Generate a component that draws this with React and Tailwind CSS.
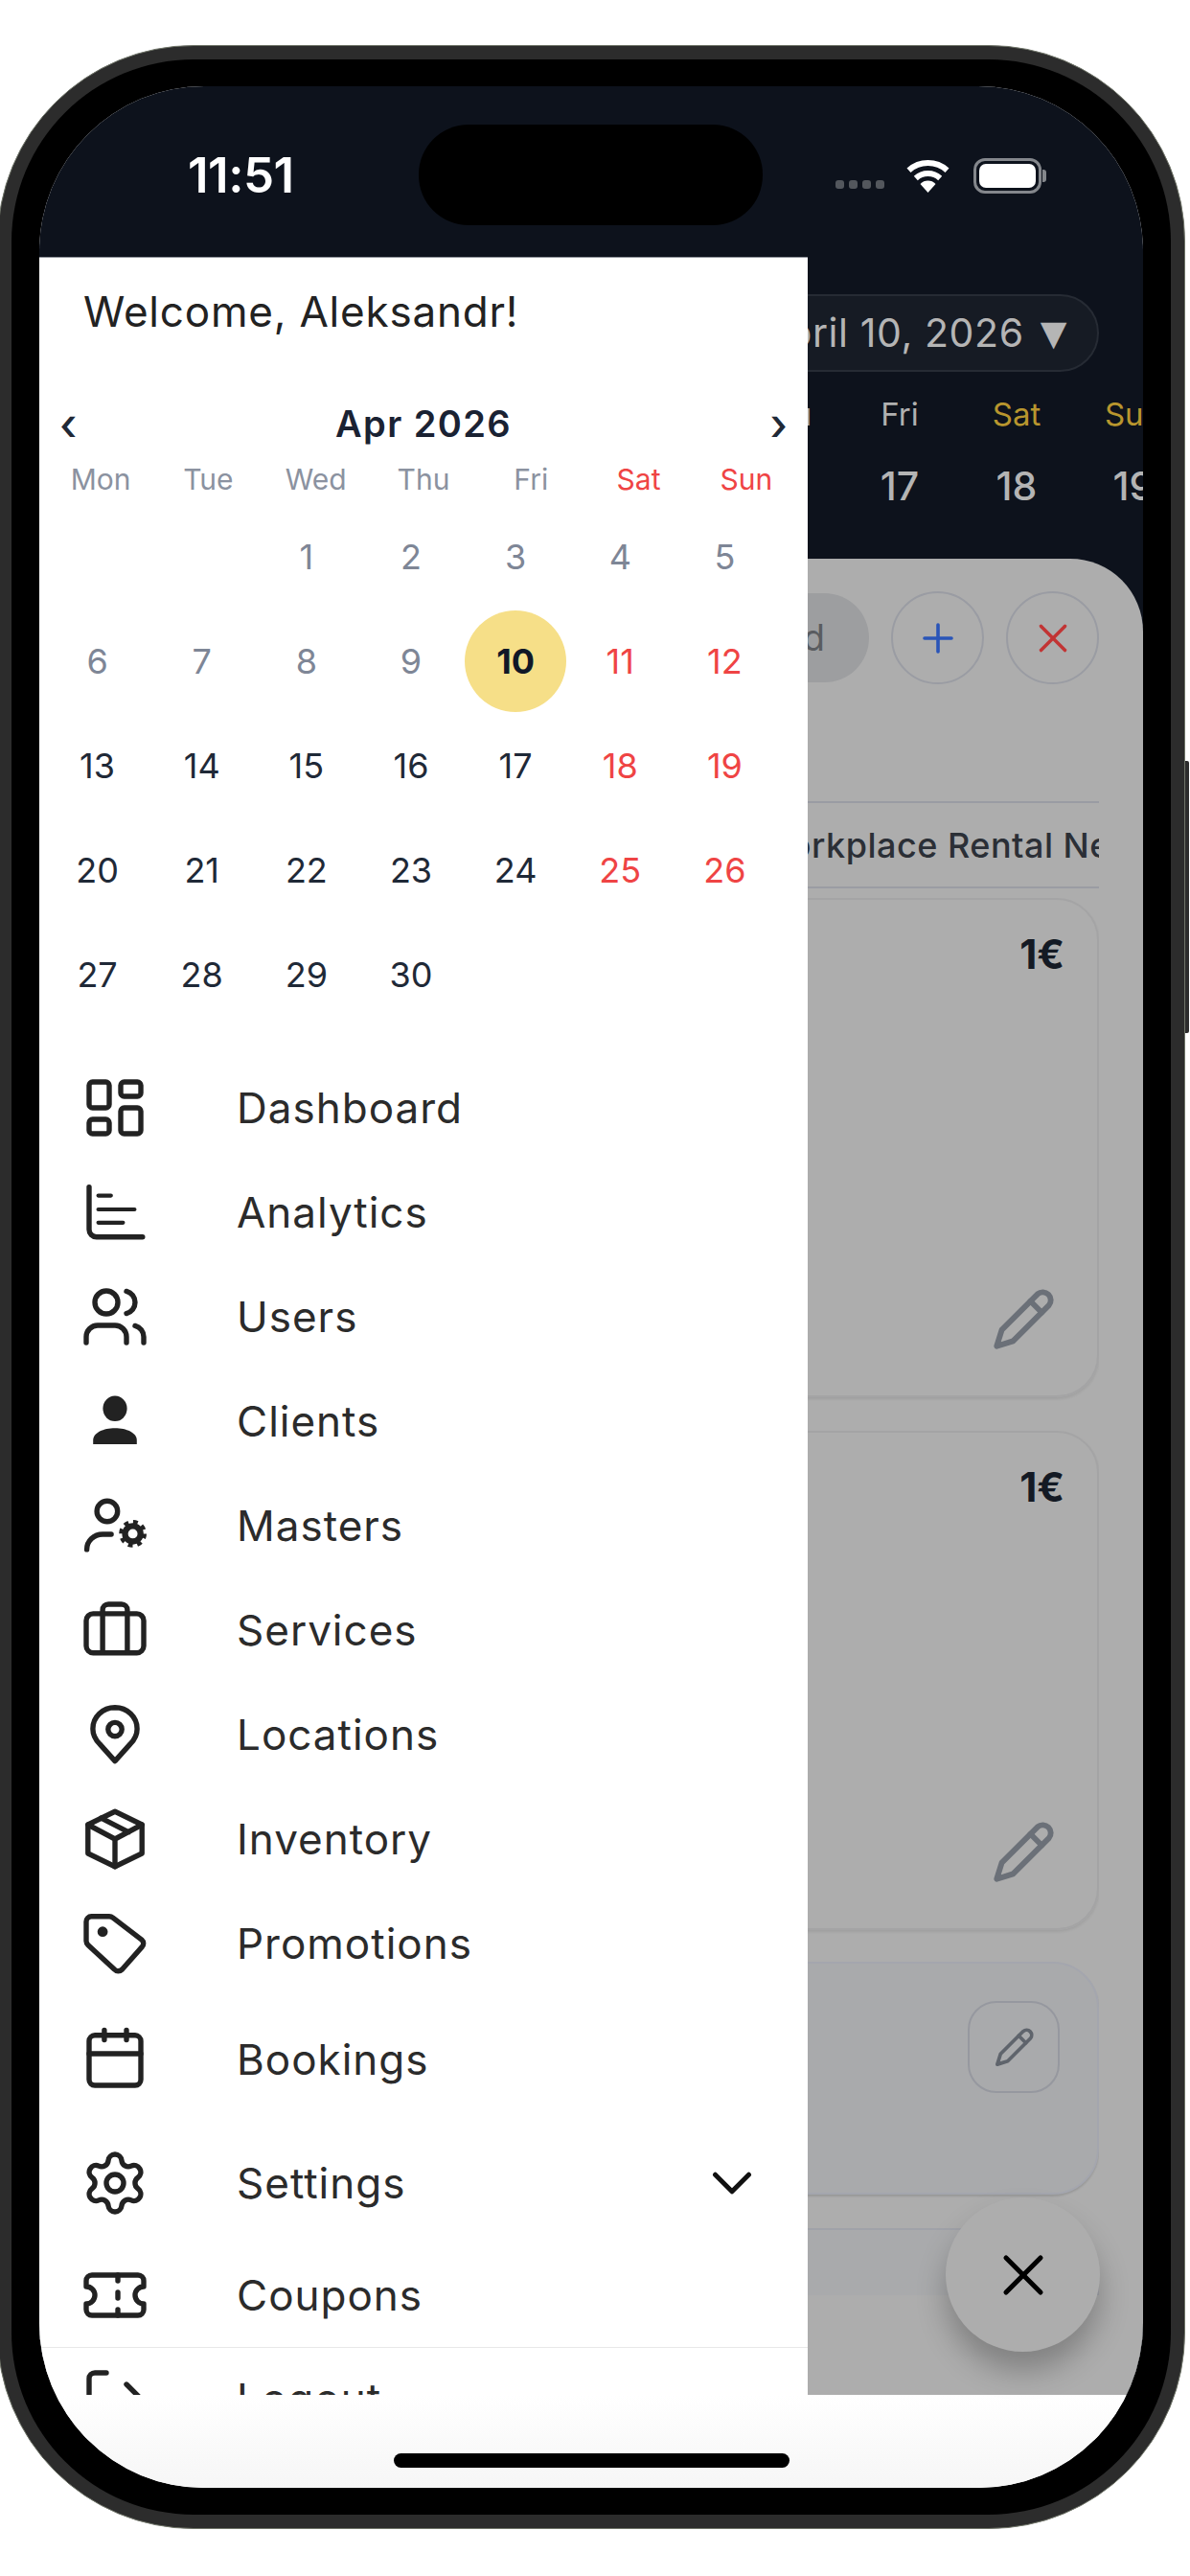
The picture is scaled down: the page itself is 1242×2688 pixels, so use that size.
import { ChevronDown, LogOut, Plus, Settings, Ticket, Users, X } from "lucide-react";

function Svg({ children, className = "" }) {
  return (
    <svg viewBox="0 0 24 24" width="72" height="72" fill="none" stroke="currentColor" strokeWidth="1.8" strokeLinecap="round" strokeLinejoin="round" className={className}>
      {children}
    </svg>
  );
}

function EditPencil({ size, className = "" }) {
  return (
    <svg viewBox="0 0 90 90" width={size} height={size} fill="none" stroke="currentColor" strokeWidth="5.5" strokeLinecap="round" strokeLinejoin="round" className={className}>
      <path d="M19 71 24 55 59 20A7.8 7.8 0 0 1 70 31L35 66Z" />
      <path d="M52 27 63 38" />
    </svg>
  );
}

const icons = {
  dashboard: (
    <Svg>
      <rect x="3" y="3" width="7" height="9" rx="1.2" />
      <rect x="14" y="3" width="7" height="5" rx="1.2" />
      <rect x="14" y="12" width="7" height="9" rx="1.2" />
      <rect x="3" y="16" width="7" height="5" rx="1.2" />
    </Svg>
  ),
  analytics: (
    <Svg>
      <path d="M3 3.2V18a2.6 2.6 0 0 0 2.6 2.6H21.6" />
      <path d="M6.2 6.2h4.4M6.2 11h12.6M6.2 15.6h8.6" strokeWidth="1.4" />
    </Svg>
  ),
  users: <Users size={72} strokeWidth={1.8} />,
  clients: (
    <Svg>
      <ellipse cx="12" cy="7.6" rx="4.2" ry="4.4" fill="currentColor" stroke="none" />
      <path d="M4.4 20v-1.4C4.4 16 8 14.4 12 14.4s7.6 1.6 7.6 4.2V20z" fill="currentColor" stroke="none" />
    </Svg>
  ),
  masters: (
    <Svg>
      <circle cx="9.3" cy="7" r="3.6" />
      <path d="M2.2 20.3c0-3 2.5-5.3 5.5-5.3h3" />
      <circle cx="18.2" cy="14.8" r="2.7" strokeWidth="2.1" />
      <circle cx="18.2" cy="14.8" r="4" strokeWidth="1.6" strokeDasharray="1.57 1.57" strokeLinecap="butt" />
    </Svg>
  ),
  services: (
    <Svg>
      <rect x="2" y="6.3" width="20" height="13.6" rx="2.4" />
      <path d="M7.7 19.8V5a2 2 0 0 1 2-2h4.6a2 2 0 0 1 2 2v14.8" />
    </Svg>
  ),
  locations: (
    <Svg>
      <path d="M12 2.6C7.7 2.6 4.3 5.9 4.3 10c0 2.2 1 3.9 2.4 5.3L12 21.2l5.3-5.9c1.4-1.4 2.4-3.1 2.4-5.3 0-4.1-3.4-7.4-7.7-7.4z" />
      <circle cx="12" cy="10.2" r="2.4" />
    </Svg>
  ),
  inventory: (
    <Svg>
      <path d="M12 2.4 21.4 7v10L12 21.6 2.6 17V7z" />
      <path d="M2.6 7 12 12l9.4-5M12 12v9.6M7.2 4.7l9.6 4.9" />
    </Svg>
  ),
  promotions: (
    <Svg>
      <path d="M3.8 2.6H10c.5 0 1 .2 1.4.5L21.3 10.7c.8.7.8 1.9 0 2.6L14.5 21c-.8.8-2 .8-2.7 0L2.7 12.6c-.4-.4-.7-.9-.7-1.4V4.4c0-1 .8-1.8 1.8-1.8z" />
      <circle cx="7.7" cy="7.9" r="0.9" fill="currentColor" />
    </Svg>
  ),
  bookings: (
    <Svg>
      <rect x="3" y="3.6" width="18" height="17.4" rx="2" />
      <path d="M8.3 1.8v3.4M16 1.8v3.4M3 10h18" />
    </Svg>
  ),
  settings: <Settings size={72} strokeWidth={1.8} />,
  coupons: <Ticket size={72} strokeWidth={1.8} />,
  logout: <LogOut size={72} strokeWidth={1.8} />,
};

const menu = [
  { label: "Dashboard", icon: "dashboard", row: "h-[109px]" },
  { label: "Analytics", icon: "analytics", row: "h-[109px]" },
  { label: "Users", icon: "users", row: "h-[109px]" },
  { label: "Clients", icon: "clients", row: "h-[109px]" },
  { label: "Masters", icon: "masters", row: "h-[109px]" },
  { label: "Services", icon: "services", row: "h-[109px]" },
  { label: "Locations", icon: "locations", row: "h-[109px]" },
  { label: "Inventory", icon: "inventory", row: "h-[109px]" },
  { label: "Promotions", icon: "promotions", row: "h-[109px]" },
  { label: "Bookings", icon: "bookings", row: "h-[133px]" },
  { label: "Settings", icon: "settings", row: "h-[125px]", expand: true },
  { label: "Coupons", icon: "coupons", row: "h-[109px]" },
  { label: "Logout", icon: "logout", row: "h-[107px] border-t border-[#e8e8e8]" },
];

const weekDays = ["Mon", "Tue", "Wed", "Thu", "Fri", "Sat", "Sun"];

function dayColor(day, col) {
  if (day === 10) return "text-[#111827] font-bold";
  if (col >= 5 && day > 10) return "text-[#ef4444]";
  if (day < 10) return "text-[#7e8696]";
  return "text-[#1f2937]";
}

function Calendar() {
  const cells = [null, null];
  for (let d = 1; d <= 30; d++) cells.push(d);

  return (
    <div>
      <div className="flex items-center justify-between px-[21px] mt-[65px] h-[48px]">
        <span className="text-[46px] leading-none font-medium text-[#1f2937]">‹</span>
        <span className="text-[38px] font-semibold tracking-[1.4px] text-[#1a2233]">Apr 2026</span>
        <span className="text-[46px] leading-none font-medium text-[#1f2937]">›</span>
      </div>
      <div className="grid grid-cols-7 mx-[8px] w-[786px] mt-[12px] h-[40px] items-center text-center text-[30px]">
        {weekDays.map((d, i) => (
          <span key={d} className={i >= 5 ? "text-[#ef4444]" : "text-[#8b92a0]"}>{d}</span>
        ))}
      </div>
      <div className="grid grid-cols-7 auto-rows-[109px] mx-[6px] w-[764px] mt-[8px] text-[36px]">
        {cells.map((day, i) => (
          <div key={i} className="flex items-center justify-center">
            {day && (
              <span className={`flex items-center justify-center w-[106px] h-[106px] rounded-full ${day === 10 ? "bg-[#f6df88]" : ""} ${dayColor(day, i % 7)}`}>
                {day}
              </span>
            )}
          </div>
        ))}
      </div>
    </div>
  );
}

function Drawer() {
  return (
    <div className="absolute left-0 top-[178px] w-[802px] h-[2231px] bg-white overflow-hidden border-t border-[#8e929a]">
      <p className="pl-[46px] pt-[28px] text-[44px] leading-[56px] tracking-[0.8px] text-[#222222]">Welcome, Aleksandr!</p>
      <Calendar />
      <div className="mt-[30px]">
        {menu.map((item) => (
          <div key={item.label} className={`flex items-center pl-[43px] text-[#222222] ${item.row}`}>
            <span className="w-[72px] h-[72px] shrink-0">{icons[item.icon]}</span>
            <span className="ml-[91px] text-[44px] tracking-[1px] text-[#2b2b2b]">{item.label}</span>
            {item.expand && <ChevronDown size={70} strokeWidth={1.7} className="ml-auto mr-[44px] text-[#111111]" />}
          </div>
        ))}
      </div>
    </div>
  );
}

function StatusBar() {
  return (
    <div className="flex items-center h-[186px] pl-[155px] pr-[101px] text-white">
      <span className="text-[51px] font-semibold tracking-[-0.5px]">11:51</span>
      <div className="ml-auto flex items-end gap-[5px] mt-[19px]">
        {[0, 1, 2, 3].map((i) => (
          <span key={i} className="w-[9px] h-[9px] rounded-[3px] bg-[#53575d]" />
        ))}
      </div>
      <svg width="47" height="37" viewBox="0 0 47 37" className="ml-[22px]" fill="none" stroke="white" strokeWidth="6">
        <path d="M3.5 12.7A30 30 0 0 1 43.5 12.7" />
        <path d="M10.8 20.9A19 19 0 0 1 36.2 20.9" />
        <path d="M23.5 36 15.5 27A11 11 0 0 1 31.5 27Z" fill="white" stroke="none" />
      </svg>
      <div className="ml-[24px] flex items-center">
        <span className="flex w-[71px] h-[37px] rounded-[12px] border-[3px] border-[#84878c] p-[3px]">
          <span className="flex-1 rounded-[7px] bg-white" />
        </span>
        <span className="w-[4px] h-[13px] ml-[1px] rounded-r-[3px] bg-[#84878c]" />
      </div>
    </div>
  );
}

function DateStrip() {
  return (
    <>
      <div className="flex justify-end pr-[46px] mt-[31px]">
        <div className="flex items-center h-[81px] pl-[60px] pr-[31px] rounded-full border-[2px] border-[#262b34] bg-[#161b24] text-[#b5b5b5] text-[41px] tracking-[0.6px] whitespace-nowrap">
          April 10, 2026
          <span className="ml-[17px] text-[36px] font-['DejaVu_Sans',sans-serif]">▼</span>
        </div>
      </div>
      <div className="flex justify-end -mr-[51px] mt-[22px] text-center text-[33px] leading-[44px]">
        <span className="w-[122px] text-[#b0b0b0]">Thu</span>
        <span className="w-[122px] text-[#b0b0b0]">Fri</span>
        <span className="w-[122px] text-[#b8962e]">Sat</span>
        <span className="w-[122px] text-[#b8962e]">Sun</span>
      </div>
      <div className="flex justify-end -mr-[51px] mt-[28px] text-center text-[41px] leading-[50px] font-medium text-[#b4b4b4]">
        <span className="w-[122px]">16</span>
        <span className="w-[122px]">17</span>
        <span className="w-[122px]">18</span>
        <span className="w-[122px]">19</span>
      </div>
    </>
  );
}

function ServiceCard() {
  return (
    <div className="flex flex-col items-end h-[521px] rounded-[44px] border-[2px] border-[#a4a4a5] shadow-[0_2px_3px_rgba(0,0,0,0.08)] pt-[33px] pr-[34px] pb-[31px]">
      <span className="text-[42px] leading-[48px] font-bold text-[#141a24]">1€</span>
      <EditPencil size={96} className="mt-auto -mr-[5px] text-[#6b7078]" />
    </div>
  );
}

function Sheet() {
  return (
    <div className="flex-1 mt-[51px] rounded-t-[76px] bg-[#adadad] pr-[46px] pt-[34px]">
      <div className="flex justify-end items-center gap-[23px]">
        <span className="flex items-center h-[93px] px-[46px] rounded-full bg-[#9d9ea0] text-[38px] text-[#5a5c60]">Add Record</span>
        <span className="flex items-center justify-center w-[97px] h-[97px] rounded-full border-[2px] border-[#9a9ca3] text-[#2a55b8]">
          <Plus size={48} strokeWidth={1.8} />
        </span>
        <span className="flex items-center justify-center w-[97px] h-[97px] rounded-full border-[2px] border-[#9a9ca3] text-[#c23434]">
          <X size={50} strokeWidth={1.7} />
        </span>
      </div>
      <div className="flex justify-end items-center mt-[122px] h-[91px] border-y-[2px] border-[#9a9ca3] overflow-hidden whitespace-nowrap">
        <span className="text-[36px] font-medium tracking-[0.5px] text-[#2b2f36] -mr-[12px]">Workplace Rental Ne</span>
      </div>
      <div className="h-[1458px] mt-[10px] overflow-hidden">
        <ServiceCard />
        <div className="mt-[35px]">
          <ServiceCard />
        </div>
        <div className="flex justify-end h-[243px] mt-[33px] rounded-[48px] border-[2px] border-[#a4a6ae] bg-[#a9aaac] pt-[39px] pr-[39px] shadow-[0_2px_2px_rgba(0,0,0,0.12)]">
          <span className="flex items-center justify-center w-[96px] h-[96px] rounded-[30px] border-[2px] border-[#96989f] text-[#5f646c]">
            <EditPencil size={61} />
          </span>
        </div>
        <div className="h-[243px] mt-[35px] rounded-[48px] border-[2px] border-[#a0a2a9] bg-[#a9aaac]" />
      </div>
    </div>
  );
}

export default function App() {
  return (
    <div className="min-h-[2688px] bg-white pt-[47px] font-['Inter',sans-serif] font-[380] overflow-hidden">
      <div className="relative -ml-[3px] w-[1240px] h-[2592px] rounded-[205px] bg-[#2c2c2c] border-[1px] border-[#6f7468] p-[14px]">
        <span className="absolute -right-[5px] top-[746px] w-[4px] h-[284px] rounded-r-[2px] bg-[#2c2c2c]" />
        <div className="w-full h-full rounded-[190px] bg-black px-[29px] py-[28px]">
          <div className="relative flex flex-col w-[1152px] h-[2506px] rounded-[172px] overflow-hidden bg-white">
            <div className="flex flex-col h-[2409px] bg-[#0d121c] overflow-hidden">
              <StatusBar />
              <DateStrip />
              <Sheet />
            </div>
            <div className="flex-1 flex justify-center pt-[61px] bg-gradient-to-b from-white to-[#f6f6f6]">
              <span className="w-[413px] h-[15px] rounded-full bg-black" />
            </div>
            <span className="absolute left-[396px] top-[40px] w-[359px] h-[105px] rounded-[52px] bg-black" />
            <Drawer />
            <span className="absolute right-[45px] bottom-[142px] flex items-center justify-center w-[161px] h-[161px] rounded-full bg-[#adadad] shadow-[0_20px_30px_rgba(0,0,0,0.25)] text-black">
              <X size={72} strokeWidth={1.7} />
            </span>
          </div>
        </div>
      </div>
    </div>
  );
}
